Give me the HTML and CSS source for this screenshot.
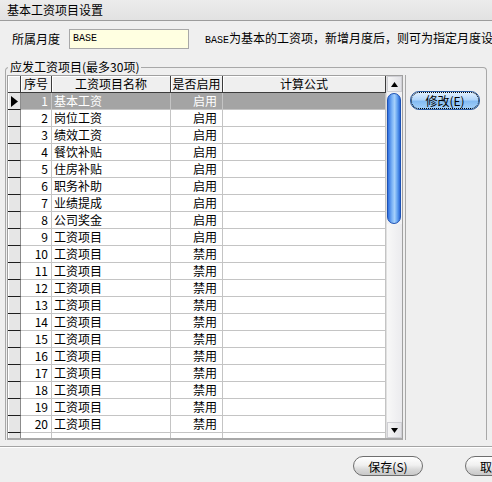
FILE: index.html
```html
<!DOCTYPE html>
<html lang="zh-CN">
<head>
<meta charset="utf-8">
<title>基本工资项目设置</title>
<link rel="stylesheet" href="styles.css">
</head>
<body>
<div class="window">
  <div class="titlebar">基本工资项目设置</div>

  <div class="month-row">
    <span class="month-label">所属月度</span>
    <div class="month-input">BASE</div>
    <span class="month-hint"><span class="mono">BASE</span>为基本的工资项，新增月度后，则可为指定月度设置工资项目</span>
  </div>

  <fieldset class="group">
    <legend class="group-legend">应发工资项目(最多30项)</legend>
    <div class="group-body">
      <div class="grid">
        <div class="grid-table">
          <div class="row head">
            <div class="cell ind"></div>
            <div class="cell hc">序号</div>
            <div class="cell hc">工资项目名称</div>
            <div class="cell hc">是否启用</div>
            <div class="cell hc">计算公式</div>
          </div>
          <div class="row sel">
            <div class="cell ind"><svg class="ptr" width="7" height="11" viewBox="0 0 7 11"><path d="M0 0 L7 5.5 L0 11 Z" fill="#000"/></svg></div>
            <div class="cell num">1</div><div class="cell name">基本工资</div><div class="cell en">启用</div><div class="cell fx"></div>
          </div>
          <div class="row"><div class="cell ind"></div><div class="cell num">2</div><div class="cell name">岗位工资</div><div class="cell en">启用</div><div class="cell fx"></div></div>
          <div class="row"><div class="cell ind"></div><div class="cell num">3</div><div class="cell name">绩效工资</div><div class="cell en">启用</div><div class="cell fx"></div></div>
          <div class="row"><div class="cell ind"></div><div class="cell num">4</div><div class="cell name">餐饮补贴</div><div class="cell en">启用</div><div class="cell fx"></div></div>
          <div class="row"><div class="cell ind"></div><div class="cell num">5</div><div class="cell name">住房补贴</div><div class="cell en">启用</div><div class="cell fx"></div></div>
          <div class="row"><div class="cell ind"></div><div class="cell num">6</div><div class="cell name">职务补助</div><div class="cell en">启用</div><div class="cell fx"></div></div>
          <div class="row"><div class="cell ind"></div><div class="cell num">7</div><div class="cell name">业绩提成</div><div class="cell en">启用</div><div class="cell fx"></div></div>
          <div class="row"><div class="cell ind"></div><div class="cell num">8</div><div class="cell name">公司奖金</div><div class="cell en">启用</div><div class="cell fx"></div></div>
          <div class="row"><div class="cell ind"></div><div class="cell num">9</div><div class="cell name">工资项目</div><div class="cell en">启用</div><div class="cell fx"></div></div>
          <div class="row"><div class="cell ind"></div><div class="cell num">10</div><div class="cell name">工资项目</div><div class="cell en">禁用</div><div class="cell fx"></div></div>
          <div class="row"><div class="cell ind"></div><div class="cell num">11</div><div class="cell name">工资项目</div><div class="cell en">禁用</div><div class="cell fx"></div></div>
          <div class="row"><div class="cell ind"></div><div class="cell num">12</div><div class="cell name">工资项目</div><div class="cell en">禁用</div><div class="cell fx"></div></div>
          <div class="row"><div class="cell ind"></div><div class="cell num">13</div><div class="cell name">工资项目</div><div class="cell en">禁用</div><div class="cell fx"></div></div>
          <div class="row"><div class="cell ind"></div><div class="cell num">14</div><div class="cell name">工资项目</div><div class="cell en">禁用</div><div class="cell fx"></div></div>
          <div class="row"><div class="cell ind"></div><div class="cell num">15</div><div class="cell name">工资项目</div><div class="cell en">禁用</div><div class="cell fx"></div></div>
          <div class="row"><div class="cell ind"></div><div class="cell num">16</div><div class="cell name">工资项目</div><div class="cell en">禁用</div><div class="cell fx"></div></div>
          <div class="row"><div class="cell ind"></div><div class="cell num">17</div><div class="cell name">工资项目</div><div class="cell en">禁用</div><div class="cell fx"></div></div>
          <div class="row"><div class="cell ind"></div><div class="cell num">18</div><div class="cell name">工资项目</div><div class="cell en">禁用</div><div class="cell fx"></div></div>
          <div class="row"><div class="cell ind"></div><div class="cell num">19</div><div class="cell name">工资项目</div><div class="cell en">禁用</div><div class="cell fx"></div></div>
          <div class="row"><div class="cell ind"></div><div class="cell num">20</div><div class="cell name">工资项目</div><div class="cell en">禁用</div><div class="cell fx"></div></div>
          <div class="row filler"><div class="cell ind"></div><div class="cell"></div><div class="cell"></div><div class="cell"></div><div class="cell"></div></div>
        </div>
        <div class="scrollbar">
          <div class="sb-btn"><svg width="7" height="5" viewBox="0 0 7 5"><path d="M3.5 0 L7 5 L0 5 Z" fill="#000"/></svg></div>
          <div class="sb-thumb"></div>
          <div class="sb-track"></div>
          <div class="sb-btn"><svg width="7" height="5" viewBox="0 0 7 5"><path d="M0 0 L7 0 L3.5 5 Z" fill="#000"/></svg></div>
        </div>
      </div>
      <div class="side">
        <button class="btn btn-blue" type="button">修改(E)</button>
      </div>
    </div>
  </fieldset>

  <div class="separator"></div>

  <div class="actions">
    <button class="btn btn-gray" type="button">保存(S)</button>
    <button class="btn btn-gray" type="button">取消(C)</button>
  </div>
</div>
</body>
</html>
```

FILE: styles.css
```css
* { box-sizing: border-box; }

html, body {
  margin: 0;
  padding: 0;
  background: #efefef;
}

body {
  width: 492px;
  height: 482px;
  overflow: hidden;
  font-family: "Noto Sans CJK SC", "DejaVu Sans", sans-serif;
  font-size: 12px;
  color: #000;
}

.window {
  width: 492px;
  height: 482px;
  overflow: hidden;
}

.titlebar {
  height: 21px;
  line-height: 20px;
  padding-left: 7px;
  background: linear-gradient(#ececec, #e2e2e2);
  border-bottom: 1px solid #9c9c9c;
}

.month-row {
  display: flex;
  align-items: center;
  height: 20px;
  margin-top: 8px;
  padding-left: 12px;
  white-space: nowrap;
  overflow: hidden;
}

.month-label {
  flex: none;
  width: 57px;
  line-height: 20px;
}

.month-input {
  flex: none;
  width: 120px;
  height: 20px;
  border: 1px solid #a8a8a8;
  background: #ffffe1;
  padding-left: 3px;
  font-family: "Liberation Mono", monospace;
  font-size: 10px;
  line-height: 18px;
}

.month-hint {
  flex: none;
  margin-left: 16px;
  line-height: 20px;
}

.mono {
  font-family: "Liberation Mono", monospace;
  font-size: 10px;
}

.group {
  margin: 11px 5px 0 5px;
  padding: 1px 0 0 1px;
  border: 1px solid #a8a8a8;
  border-bottom: none;
  border-radius: 4px 4px 0 0;
  min-width: 0;
}

.group-legend {
  margin-left: 1px;
  padding: 0 2px;
  line-height: 14px;
  font-size: 12px;
}

.group-body {
  display: flex;
  align-items: stretch;
}

.grid {
  display: flex;
  width: 396px;
  border: 1px solid #a0a0a0;
  border-bottom: 2px solid #a8a8a8;
  background: #fff;
}

.grid-table {
  width: 378px;
  display: flex;
  flex-direction: column;
}

.row {
  display: grid;
  grid-template-columns: 13px 31px 119px 52px 163px;
  height: 17px;
}

.row.filler {
  height: 5px;
}

.cell {
  border-right: 1px solid #c4c4c4;
  border-bottom: 1px solid #c4c4c4;
  line-height: 16px;
  white-space: nowrap;
  overflow: hidden;
}

.filler .cell {
  border-bottom: none;
}

.cell.ind {
  background: #e6e6e6;
  border-right: 1px solid #8c8c8c;
  border-bottom: 1px solid #1e1e1e;
  box-shadow: inset 1px 0 #ffffff;
  display: flex;
  align-items: center;
  padding-left: 3px;
}

.filler .cell.ind {
  border-bottom: none;
}

.head .cell {
  background: #efefef;
  border-right: 1px solid #3c3c3c;
  border-bottom: 1px solid #3c3c3c;
  box-shadow: inset 1px 1px #ffffff;
}

.head .cell.hc {
  text-align: center;
}

.cell.num {
  text-align: right;
  padding-right: 3px;
}

.cell.name {
  padding-left: 2px;
}

.cell.en {
  text-align: right;
  padding-right: 5px;
}

.row.sel .cell:not(.ind) {
  background: #a4a4a4;
  color: #fff;
}

.ptr {
  display: block;
}

.scrollbar {
  width: 16px;
  display: flex;
  flex-direction: column;
  background: #f2f2f4;
  border-left: 1px solid #e0e0e0;
}

.sb-btn {
  height: 16px;
  display: flex;
  align-items: center;
  justify-content: center;
  background: linear-gradient(90deg, #f6f6f6, #e2e2e6);
  border: 1px solid #cfcfd4;
}

.sb-thumb {
  height: 131px;
  margin: 1px 1px 0 0;
  border: 1px solid #1d52b4;
  border-radius: 7px;
  background: linear-gradient(90deg, #2f6fe0 0%, #7fb6f6 35%, #a6d0fb 55%, #5c9cee 80%, #2a66d6 100%);
}

.sb-track {
  flex: 1;
  background: linear-gradient(90deg, #f8f8f8, #ebebee);
}

.side {
  flex: 1;
  margin-left: 2px;
  border-left: 1px solid #a8a8a8;
  padding: 16px 0 0 4px;
}

.btn {
  font-family: "Noto Sans CJK SC", "DejaVu Sans", sans-serif;
  font-size: 12px;
  line-height: 15px;
  color: #000;
  padding: 0;
  cursor: default;
}

.btn-blue {
  width: 70px;
  height: 19px;
  border: 1px solid #2c5da4;
  border-radius: 9px;
  background: linear-gradient(#e4f2ff 0%, #b2d6fb 45%, #84bbf2 55%, #a6d2fb 100%);
  outline: 1px dotted #000;
  outline-offset: -2px;
}

.separator {
  margin-top: 6px;
  height: 2px;
  border-top: 1px solid #a4a4a4;
  border-bottom: 1px solid #ffffff;
}

.actions {
  display: flex;
  gap: 42px;
  margin-top: 8px;
  padding-left: 353px;
}

.btn-gray {
  flex: none;
  width: 70px;
  height: 20px;
  border: 1px solid #6e6e6e;
  border-radius: 10px;
  background: linear-gradient(#ffffff 0%, #f0f0f0 45%, #d8d8d8 70%, #c8c8c8 100%);
}
```
